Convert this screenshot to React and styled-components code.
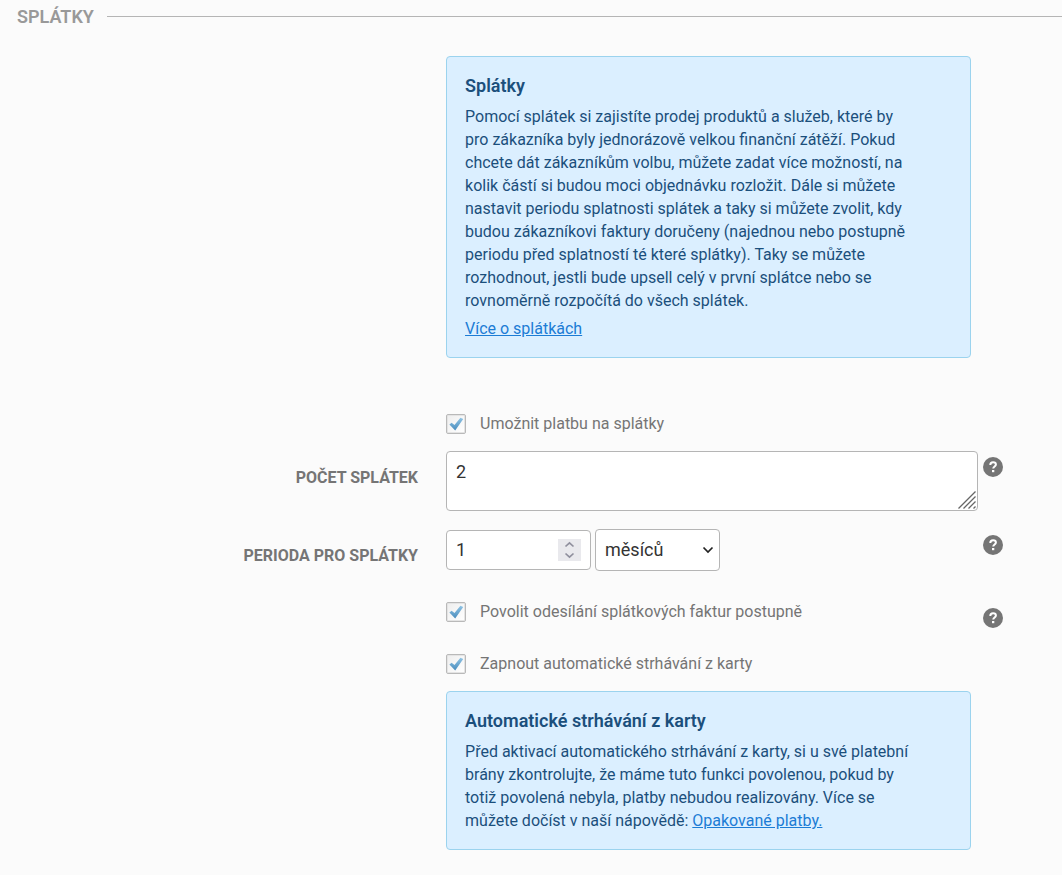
import React, { useState } from 'react';
import styled, { createGlobalStyle } from 'styled-components';

const GlobalStyle = createGlobalStyle`
*{
  box-sizing: border-box;
}
body{
  margin: 0;
  background-color: #fbfbfb;
  color: #757575;
  font-family: Roboto, "Liberation Sans", sans-serif;
  font-size: 16px;
  line-height: 23px;
}
`

const HelpButton = ({ label }) => (
  <Help type="button" aria-label={label}>
    <svg width="20" height="20" viewBox="0 0 20 20" aria-hidden="true">
      <circle cx="10" cy="10" r="10" fill="#757575" />
      <path d="M7.3 8 C7.3 6.2 8.5 5.3 10.1 5.3 C11.8 5.3 12.9 6.2 12.9 7.6 C12.9 9.5 10.2 9.5 10.2 11.6" fill="none" stroke="#fff" strokeWidth="2" />
      <rect x="9" y="13" width="2.3" height="2.2" fill="#fff" />
    </svg>
  </Help>
)

const CheckField = ({ id, children }) => (
  <CheckLabel htmlFor={id}>
    <CheckBox>
      <input id={id} type="checkbox" defaultChecked />
      <svg width="20" height="20" viewBox="0 0 20 20" aria-hidden="true">
        <defs>
          <linearGradient id={`${id}-fill`} x1="0" y1="0" x2="0" y2="1">
            <stop offset="0" stopColor="#8fc3e4" />
            <stop offset="1" stopColor="#4a8dbd" />
          </linearGradient>
        </defs>
        <path d="M3.4 10.6 L5.6 8.7 L8.5 11 L14.4 3.8 L17.2 5 L9.2 16.4 Z" fill={`url(#${id}-fill)`} />
      </svg>
    </CheckBox>
    {children}
  </CheckLabel>
)

export default function App() {
  const [count, setCount] = useState('2');
  const [period, setPeriod] = useState(1);

  return (
    <>
      <GlobalStyle />
      <Form>
        <SectionTitle>SPLÁTKY</SectionTitle>

        <Row $space={56}>
          <Content>
            <InfoBox>
              <h3>Splátky</h3>
              <p>
                Pomocí splátek si zajistíte prodej produktů a služeb, které by pro zákazníka byly
                jednorázově velkou finanční zátěží. Pokud chcete dát zákazníkům volbu, můžete zadat
                více možností, na kolik částí si budou moci objednávku rozložit. Dále si můžete
                nastavit periodu splatnosti splátek a taky si můžete zvolit, kdy budou zákazníkovi
                faktury doručeny (najednou nebo postupně periodu před splatností té které splátky).
                Taky se můžete rozhodnout, jestli bude upsell celý v první splátce nebo se
                rovnoměrně rozpočítá do všech splátek.
              </p>
              <p><a href="#splatky">Více o splátkách</a></p>
            </InfoBox>
          </Content>
        </Row>

        <Row $space={17}>
          <Content>
            <CheckField id="allow">Umožnit platbu na splátky</CheckField>
          </Content>
        </Row>

        <Row $space={18}>
          <FieldLabel htmlFor="count">POČET SPLÁTEK</FieldLabel>
          <Content>
            <TextAreaWrap>
              <TextArea id="count" value={count} onChange={e => setCount(e.target.value)} />
              <svg width="18" height="18" viewBox="0 0 18 18" aria-hidden="true">
                <path d="M0.5 17.5 L17.5 0.5 M5.5 17.5 L17.5 5.5 M10.5 17.5 L17.5 10.5 M15.5 17.5 L17.5 15.5" stroke="#666" strokeWidth="1.3" />
              </svg>
            </TextAreaWrap>
          </Content>
          <HelpButton label="Nápověda k počtu splátek" />
        </Row>

        <Row $space={31}>
          <FieldLabel htmlFor="period">PERIODA PRO SPLÁTKY</FieldLabel>
          <Content>
            <Period>
              <NumberWrap>
                <input id="period" type="number" min="1" value={period} onChange={e => setPeriod(e.target.value)} />
                <Spinner>
                  <button type="button" aria-label="Zvýšit" onClick={() => setPeriod(Number(period) + 1)}>
                    <svg width="11" height="7" viewBox="0 0 11 7"><path d="M1.5 5.5 L5.5 1.8 L9.5 5.5" /></svg>
                  </button>
                  <button type="button" aria-label="Snížit" onClick={() => setPeriod(Math.max(1, period - 1))}>
                    <svg width="11" height="7" viewBox="0 0 11 7"><path d="M1.5 1.5 L5.5 5.2 L9.5 1.5" /></svg>
                  </button>
                </Spinner>
              </NumberWrap>
              <SelectWrap>
                <select aria-label="Jednotka periody" defaultValue="m">
                  <option value="d">dnů</option>
                  <option value="m">měsíců</option>
                </select>
                <svg width="12" height="8" viewBox="0 0 12 8" aria-hidden="true">
                  <path d="M1.5 1.5 L6 6 L10.5 1.5" fill="none" stroke="#222" strokeWidth="1.7" />
                </svg>
              </SelectWrap>
            </Period>
          </Content>
          <HelpButton label="Nápověda k periodě" />
        </Row>

        <Row $space={26}>
          <Content>
            <CheckField id="gradual">Povolit odesílání splátkových faktur postupně</CheckField>
          </Content>
          <HelpButton label="Nápověda k odesílání faktur" />
        </Row>

        <Row $space={17}>
          <Content>
            <CheckField id="auto">Zapnout automatické strhávání z karty</CheckField>
          </Content>
        </Row>

        <Row $space={0}>
          <Content>
            <InfoBox>
              <h3>Automatické strhávání z karty</h3>
              <p>
                Před aktivací automatického strhávání z karty, si u své platební brány
                zkontrolujte, že máme tuto funkci povolenou, pokud by totiž povolená nebyla, platby
                nebudou realizovány. Více se můžete dočíst v naší
                nápovědě: <a href="#opakovane-platby">Opakované platby.</a>
              </p>
            </InfoBox>
          </Content>
        </Row>
      </Form>
    </>
  )
}


const Form = styled.form`
padding-bottom: 24px;
`
const SectionTitle = styled.h2`
display: flex;
align-items: center;
gap: 13px;
margin: 0 0 28px;
padding: 5px 0 0 17px;
color: #999;
font-size: 18px;
font-weight: 600;
line-height: 23px;
&:after{
  content: "";
  flex: 1;
  height: 1px;
  background-color: #b5b5b5;
}
`
const Row = styled.div`
display: grid;
grid-template-columns: 42% minmax(0, 532px) 25px;
margin-bottom: ${props => props.$space}px;
`
const Content = styled.div`
grid-column: 2;
`
const FieldLabel = styled.label`
padding: 15px 28px 0 0;
font-weight: 700;
text-align: right;
`
const InfoBox = styled.div`
max-width: 525px;
padding: 17px 54px 17px 18px;
border: 1px solid #9bd3ee;
border-radius: 4px;
background-color: #dbefff;
color: #1b4f7c;
h3{
  margin: 0 0 7px;
  font-size: 18px;
  font-weight: 600;
  line-height: 24px;
}
p{
  margin: 0;
}
p + p{
  margin-top: 5px;
}
a{
  color: #1c7cd5;
}
`
const CheckLabel = styled.label`
display: flex;
align-items: flex-start;
gap: 14px;
line-height: 20px;
cursor: pointer;
`
const CheckBox = styled.span`
position: relative;
flex: none;
width: 20px;
height: 20px;
input{
  appearance: none;
  display: block;
  width: 20px;
  height: 20px;
  margin: 0;
  border: 1px solid #b9b9b9;
  border-radius: 2px;
  background: linear-gradient(135deg, #eee, #fff);
  box-shadow: inset 0 0 0 1px #e4e4e4;
}
svg{
  position: absolute;
  top: 0;
  left: 0;
  visibility: hidden;
  pointer-events: none;
}
input:checked + svg{
  visibility: visible;
}
`
const TextAreaWrap = styled.div`
position: relative;
svg{
  position: absolute;
  right: 2px;
  bottom: 2px;
  pointer-events: none;
}
`
const TextArea = styled.textarea`
display: block;
width: 100%;
height: 60px;
padding: 8px 9px;
border: 1px solid #b5b5b5;
border-radius: 4px;
background-color: #fff;
color: #333;
font: 18px/24px Roboto, "Liberation Sans", sans-serif;
resize: none;
`
const Period = styled.div`
display: flex;
align-items: center;
gap: 4px;
`
const NumberWrap = styled.div`
display: flex;
align-items: center;
width: 145px;
height: 40px;
padding: 0 9px;
border: 1px solid #b5b5b5;
border-radius: 4px;
background-color: #fff;
input{
  flex: 1;
  min-width: 0;
  padding: 0;
  border: 0;
  outline: 0;
  background: none;
  color: #333;
  font: 18px/24px Roboto, "Liberation Sans", sans-serif;
  appearance: textfield;
}
input::-webkit-inner-spin-button{
  appearance: none;
}
`
const Spinner = styled.div`
display: flex;
flex-direction: column;
width: 23px;
height: 22px;
background-color: #e9e9ed;
button{
  display: flex;
  flex: 1;
  align-items: center;
  justify-content: center;
  padding: 0;
  border: 0;
  background: none;
}
path{
  fill: none;
  stroke: #8f8f9d;
  stroke-width: 1.7;
}
`
const SelectWrap = styled.div`
position: relative;
width: 125px;
select{
  appearance: none;
  display: block;
  width: 100%;
  height: 42px;
  padding: 0 28px 0 9px;
  border: 1px solid #b5b5b5;
  border-radius: 4px;
  background-color: #fff;
  color: #333;
  font: 18px/24px Roboto, "Liberation Sans", sans-serif;
}
svg{
  position: absolute;
  top: 17px;
  right: 6px;
  pointer-events: none;
}
`
const Help = styled.button`
grid-column: 3;
align-self: start;
width: 20px;
height: 20px;
margin: 6px 0 0 5px;
padding: 0;
border: 0;
background: none;
cursor: pointer;
svg{
  display: block;
}
`
